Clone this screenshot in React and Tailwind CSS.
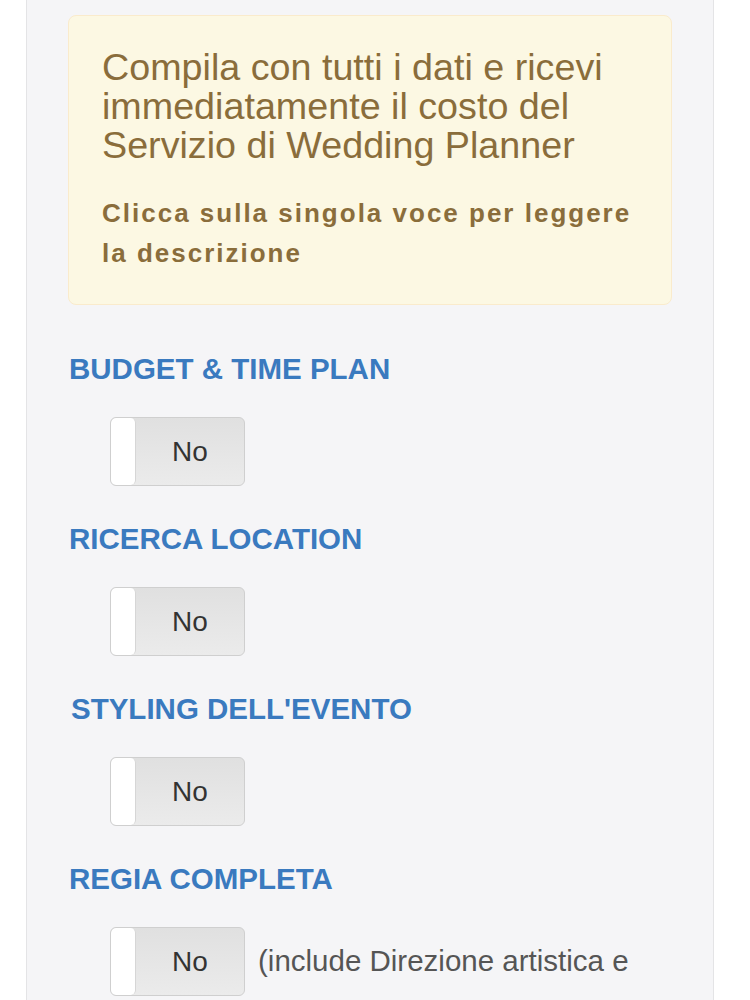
import React from 'react';

const sections = [
  { title: 'BUDGET & TIME PLAN' },
  { title: 'RICERCA LOCATION' },
  { title: "STYLING DELL'EVENTO", indent: true },
  { title: 'REGIA COMPLETA', note: '(include Direzione artistica e' },
];

function Toggle() {
  return (
    <div className="flex h-[69px] w-[135px] shrink-0 overflow-hidden rounded-[6px] border border-[#cfcfcf] bg-gradient-to-b from-[#e0e0e0] to-[#ebebeb]">
      <div className="w-[25px] rounded-[5px] border-r border-[#d6d6d6] bg-white" />
      <div className="flex flex-1 items-center justify-center text-[28px] text-[#333]">No</div>
    </div>
  );
}

export default function App() {
  return (
    <div className="min-h-screen bg-white font-['Liberation_Sans',Arial,sans-serif]">
      <div className="ml-[26px] min-h-screen w-[688px] border-x border-[#e4e4e6] bg-[#f5f5f7] px-[41px] pt-[15px]">
        <div className="rounded-[8px] border border-[#faebcc] bg-[#fcf8e3] px-[33px] pb-[31px] pt-[32px] text-[#8a6d3b]">
          <p className="text-[37.7px] leading-[39px]">
            Compila con tutti i dati e ricevi immediatamente il costo del Servizio di Wedding Planner
          </p>
          <p className="mt-[28px] text-[26px] font-bold leading-[40px] tracking-[2px]">
            Clicca sulla singola voce per leggere la descrizione
          </p>
        </div>

        <div className="pt-[49px]">
          {sections.map((s) => (
            <div key={s.title} className="pb-[38px]">
              <h3 className={`text-[29.5px] font-bold leading-[30px] text-[#3a7abf] ${s.indent ? 'pl-[3px]' : 'pl-[1px]'}`}>
                {s.title}
              </h3>
              <div className="mt-[33px] flex items-center pl-[42px]">
                <Toggle />
                {s.note && <span className="ml-[13px] whitespace-nowrap text-[29.5px] text-[#555]">{s.note}</span>}
              </div>
            </div>
          ))}
        </div>
      </div>
    </div>
  );
}
